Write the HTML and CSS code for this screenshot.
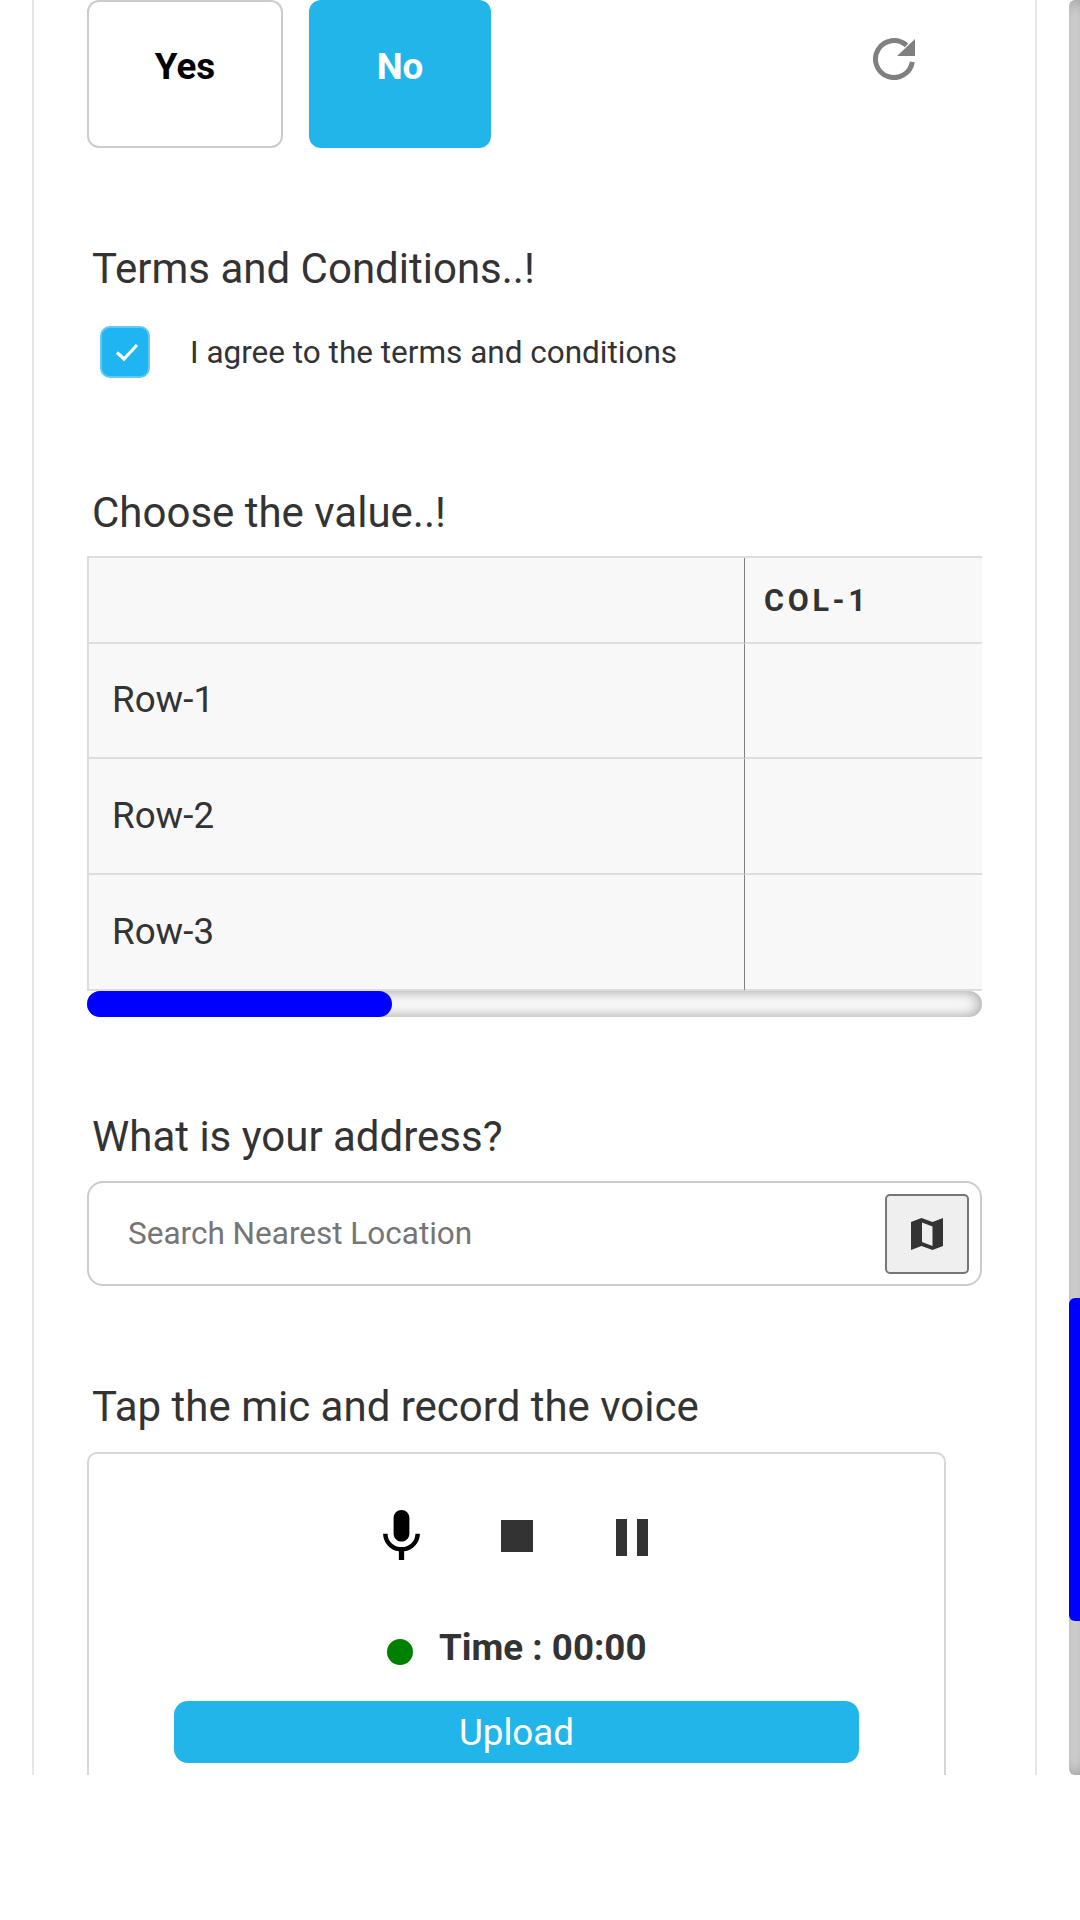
FILE: index.html
```html
<!DOCTYPE html>
<html lang="en">
<head>
<meta charset="utf-8">
<title>Form</title>
<link rel="stylesheet" href="styles.css">
</head>
<body>
<div class="screen">
  <main class="card">
    <div class="choice-row">
      <button class="choice choice-yes">Yes</button>
      <button class="choice choice-no">No</button>
      <svg class="refresh" viewBox="0 0 42 42" width="42" height="42"><path d="M33.500 7.400A18.500 18.500 0 1 0 39.300 23.800" fill="none" stroke="#808080" stroke-width="5"/><path d="M42 1V18H24Z" fill="#808080"/></svg>
    </div>

    <h2 class="label terms-label">Terms and Conditions..!</h2>
    <div class="agree">
      <span class="checkbox"><svg viewBox="0 0 24 20" width="24" height="20"><path d="M2 10.500L9 17L22 3" fill="none" stroke="#fff" stroke-width="3.200"/></svg></span>
      <span class="agree-text">I agree to the terms and conditions</span>
    </div>

    <h2 class="label value-label">Choose the value..!</h2>
    <div class="table-wrap">
      <table class="grid">
        <tr class="head-row"><th class="row-head"></th><th class="col-head">COL-1</th></tr>
        <tr class="body-row first-row"><td class="row-head">Row-1</td><td class="col-cell"></td></tr>
        <tr class="body-row"><td class="row-head">Row-2</td><td class="col-cell"></td></tr>
        <tr class="body-row"><td class="row-head">Row-3</td><td class="col-cell"></td></tr>
      </table>
    </div>
    <div class="hscroll"><div class="hscroll-thumb"></div></div>

    <h2 class="label address-label">What is your address?</h2>
    <div class="search">
      <span class="placeholder">Search Nearest Location</span>
      <button class="map-btn"><svg viewBox="0 0 32 32" width="32" height="32"><path fill="#333" fill-rule="evenodd" d="M0 4L10.500 0L21.500 4L32 0V28L21.500 32L10.500 28L0 32ZM11 4.500V24L21.500 28V8.500Z"/></svg></button>
    </div>

    <h2 class="label voice-label">Tap the mic and record the voice</h2>
    <section class="voice">
      <div class="voice-controls">
        <svg class="mic" viewBox="5 2 14 19" width="37" height="50"><path d="M12 14c1.660 0 3-1.340 3-3V5c0-1.660-1.340-3-3-3S9 3.340 9 5v6c0 1.660 1.340 3 3 3zm5.300-3c0 3-2.540 5.100-5.300 5.100S6.700 14 6.700 11H5c0 3.410 2.720 6.230 6 6.720V21h2v-3.280c3.280-.48 6-3.300 6-6.720h-1.700z"/></svg>
        <span class="stop"></span>
        <span class="pause"><i></i><i></i></span>
      </div>
      <div class="timer"><span class="dot"></span><span class="time">Time : 00:00</span></div>
      <button class="upload">Upload</button>
    </section>
  </main>
  <aside class="vscroll"><div class="vscroll-thumb"></div></aside>
</div>
</body>
</html>
```
FILE: styles.css
```css
* { box-sizing: border-box; }
html, body { margin: 0; background: #fff; }
body { height: 1920px; font-family: Roboto, "Liberation Sans", sans-serif; color: #333; overflow: hidden; }
button { font-family: inherit; }

.screen { display: flex; height: 1775px; padding-left: 32px; overflow: hidden; }
.card { width: 1005px; height: 1775px; padding: 0 53px 0 53px; border-left: 2px solid #e6e6e6; border-right: 2px solid #e6e6e6; overflow: hidden; flex: none; }

.vscroll { width: 11px; margin-left: 32px; height: 1775px; padding-top: 1298px; border-radius: 6px 0 0 6px; background: #fff; box-shadow: inset 0 0 16px rgba(0,0,0,.42); flex: none; }
.vscroll-thumb { height: 323px; background: #0000ff; border-radius: 6px 0 0 6px; }

.choice-row { display: flex; align-items: flex-start; height: 148px; }
.choice { height: 148px; padding: 0 0 16px; font-size: 36.750px; font-weight: 700; border-radius: 12px; }
.choice-yes { width: 196px; background: #fff; color: #000; border: 2px solid #cccccc; }
.choice-no { width: 182px; margin-left: 26px; background: #22b5ea; color: #fff; border: 0; }
.refresh { margin: 38px 0 0 382px; }

.label { margin: 0 0 0 5px; font-size: 42px; line-height: 48px; font-weight: 400; color: #333; }
.terms-label { margin-top: 97px; }
.value-label { margin-top: 111px; }
.address-label { margin-top: 96px; }
.voice-label { margin-top: 97px; }

.agree { display: flex; align-items: center; margin-top: 33px; height: 52px; padding-left: 13px; }
.checkbox { display: flex; align-items: center; justify-content: center; width: 50px; height: 52px; padding-left: 3px; background: #1fb4f2; border: 2px solid #62c8f3; border-radius: 10px; }
.agree-text { margin-left: 40px; font-size: 31.500px; color: #333; }

.table-wrap { width: 895px; margin-top: 19px; overflow: hidden; }
.grid { table-layout: fixed; width: 1100px; border-collapse: separate; border-spacing: 0; border-top: 2px solid #dddddd; border-left: 2px solid #dddddd; background: #f8f8f8; }
.row-head { width: 656px; padding: 0 0 0 23px; font-size: 36.750px; font-weight: 400; text-align: left; border-right: 1px solid #808080; }
.col-head { padding: 0 0 0 19px; font-size: 30.500px; font-weight: 700; letter-spacing: 3.700px; text-align: left; }
.head-row th { height: 86px; border-bottom: 2px solid #dddddd; }
.body-row td { height: 116px; padding-bottom: 2px; border-bottom: 2px solid #dddddd; }
.first-row td { height: 115px; }

.hscroll { width: 895px; height: 26px; border-radius: 13px; background: #fff; box-shadow: inset 0 0 16px rgba(0,0,0,.42); }
.hscroll-thumb { width: 305px; height: 26px; border-radius: 13px; background: #0000ff; }

.search { display: flex; align-items: center; justify-content: space-between; width: 895px; height: 105px; margin-top: 20px; padding: 2px 11px 1px 39px; border: 2px solid #cccccc; border-radius: 16px; }
.placeholder { margin-bottom: 2px; font-size: 31.500px; color: #757575; }
.map-btn { display: flex; align-items: center; justify-content: center; width: 84px; height: 80px; padding: 0; background: #efefef; border: 2px solid #767676; border-radius: 5px; }

.voice { width: 859px; height: 400px; margin-top: 21px; padding-top: 55px; border: 2px solid #d6d6d6; border-radius: 10px; }
.voice-controls { display: flex; align-items: center; height: 52px; padding-left: 294px; }
.stop { width: 32px; height: 32px; margin: 2px 0 0 81px; background: #333; }
.pause { display: flex; gap: 10px; margin: 5px 0 0 83px; }
.pause i { width: 11px; height: 37px; background: #333; }
.timer { display: flex; align-items: center; height: 44px; margin-top: 65px; padding-left: 298px; }
.dot { width: 26px; height: 26px; margin-top: 8px; border-radius: 50%; background: #008000; }
.time { margin: 0 0 2px 26px; font-size: 36.750px; font-weight: 700; color: #333; }
.upload { display: block; width: 685px; height: 62px; margin: 31px 0 0 85px; padding: 0; background: #22b5ea; color: #fff; border: 0; border-radius: 14px; font-size: 36.750px; font-weight: 400; }
```
